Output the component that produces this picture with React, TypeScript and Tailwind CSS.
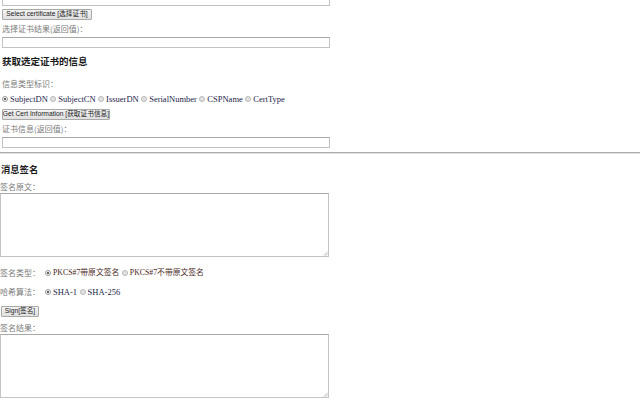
import React from "react";

const cjk = "font-['Noto_Sans_CJK_SC',sans-serif]";
const serif = "font-['Liberation_Serif','Noto_Sans_CJK_SC',serif]";

function Btn({ w, children, className = "" }: { w: string; children: React.ReactNode; className?: string }) {
  return (
    <div
      className={`${w} ${className} h-[11px] flex items-center justify-center rounded-[1px] border border-[#a9a9a9] bg-gradient-to-b from-[#f3f3f3] to-[#e0e0e0] text-[6.7px] leading-none text-[#222] font-['Liberation_Sans','Noto_Sans_CJK_SC',sans-serif] whitespace-nowrap`}
    >
      {children}
    </div>
  );
}

function Radio({ checked }: { checked?: boolean }) {
  return (
    <span
      className={`inline-flex w-[6px] h-[6px] shrink-0 items-center justify-center rounded-full border ${
        checked ? "border-[#9a9a9a] bg-[#f4f4f4]" : "border-[#b8b8b8] bg-[#e2e2e2]"
      }`}
    >
      {checked && <span className="block w-[2px] h-[2px] rounded-full bg-[#333]" />}
    </span>
  );
}

function RItem({
  label,
  checked,
  color = "text-[#24244a]",
  size = "text-[8.5px]",
}: {
  label: string;
  checked?: boolean;
  color?: string;
  size?: string;
}) {
  return (
    <span className="inline-flex items-center gap-[2px]">
      <Radio checked={checked} />
      <span className={`${serif} ${size} ${color} whitespace-nowrap`}>{label}</span>
    </span>
  );
}

function Input({ className = "" }: { className?: string }) {
  return <div className={`${className} w-[328px] h-[11px] border border-[#c2c2c2] border-t-[#a8a8a8] bg-white`} />;
}

function TextArea() {
  return (
    <div className="relative w-[329px] h-[64px] border border-[#c4c4c4] border-t-[#a8a8a8] bg-white">
      <svg className="absolute right-[0px] bottom-[0px]" width="5" height="5" viewBox="0 0 5 5">
        <path d="M4.5 1 L1 4.5 M4.5 3 L3 4.5" stroke="#9a9a9a" strokeWidth="0.7" />
      </svg>
    </div>
  );
}

export default function App() {
  return (
    <div className={`w-[640px] h-[400px] overflow-hidden bg-white ${cjk} text-[8px] text-[#7a7a7a]`}>
      <div className="pl-[2px]">
        <Input className="mt-[-5px]" />
        <Btn w="w-[90px]" className="mt-[3px]">
          Select certificate [选择证书]
        </Btn>
        <div className="mt-[2px] h-[13px] leading-[13px]">选择证书结果(返回值)：</div>
        <Input className="mt-[2px]" />
        <div className="mt-[7px] h-[13px] leading-[13px] text-[9.5px] font-bold text-[#1a1a1a]">获取选定证书的信息</div>
        <div className="mt-[10px] h-[12px] leading-[12px]">信息类型标识：</div>
        <div className="mt-[4px] h-[10px] flex items-center gap-[2.5px]">
          <RItem label="SubjectDN" checked />
          <RItem label="SubjectCN" />
          <RItem label="IssuerDN" />
          <RItem label="SerialNumber" />
          <RItem label="CSPName" />
          <RItem label="CertType" />
        </div>
        <Btn w="w-[108px]" className="mt-[5px]">
          Get Cert Information [获取证书信息]
        </Btn>
        <div className="mt-[2px] h-[13px] leading-[13px]">证书信息(返回值)：</div>
        <Input className="mt-[2px]" />
      </div>
      <div className="mt-[4px] h-[2px] border-t border-[#acacac] bg-[#e2e2e2]" />
      <div>
        <div className="pl-[1px] mt-[9px] h-[13px] leading-[13px] text-[9.3px] font-bold text-[#1a1a1a]">消息签名</div>
        <div className="mt-[5px] h-[12px] leading-[12px]">签名原文：</div>
        <TextArea />
        <div className="mt-[10px] h-[12px] flex items-center">
          <span className="w-[45px] leading-[12px]">签名类型：</span>
          <span className="flex items-center gap-[2.5px]">
            <RItem label="PKCS#7带原文签名" checked color="text-[#4a1e22]" size="text-[7.8px]" />
            <RItem label="PKCS#7不带原文签名" color="text-[#4a1e22]" size="text-[7.8px]" />
          </span>
        </div>
        <div className="mt-[7px] h-[12px] flex items-center">
          <span className="w-[45px] leading-[12px]">哈希算法：</span>
          <span className="flex items-center gap-[2.5px]">
            <RItem label="SHA-1" checked />
            <RItem label="SHA-256" />
          </span>
        </div>
        <Btn w="w-[38px]" className="mt-[8px] ml-[1px]">
          Sign[签名]
        </Btn>
        <div className="mt-[5px] h-[12px] leading-[12px]">签名结果：</div>
        <TextArea />
      </div>
    </div>
  );
}
